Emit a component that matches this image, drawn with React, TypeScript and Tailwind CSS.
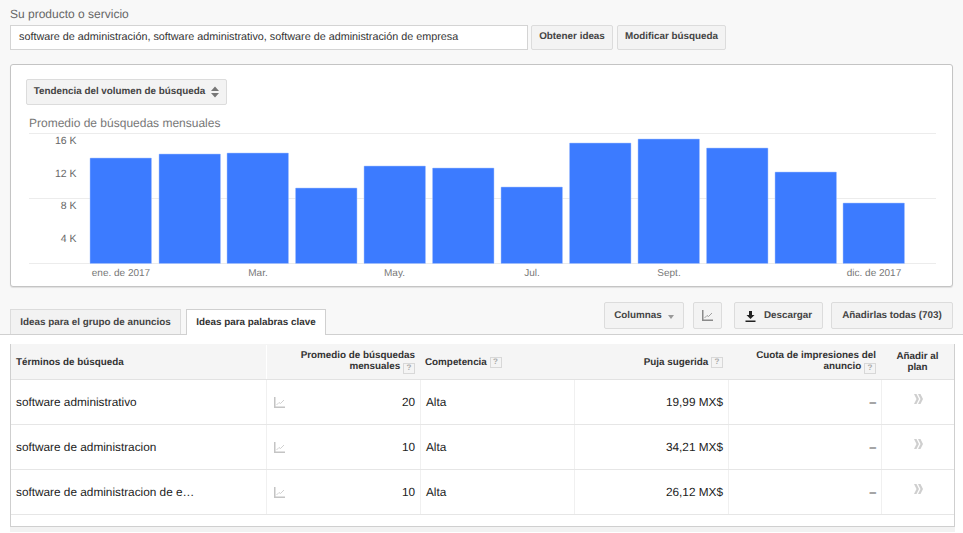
const bars = [
  { x: 90, top: 158 },
  { x: 159, top: 154 },
  { x: 227, top: 153 },
  { x: 295.5, top: 188 },
  { x: 364, top: 166 },
  { x: 432.5, top: 168 },
  { x: 501, top: 187 },
  { x: 569.5, top: 143 },
  { x: 638, top: 139 },
  { x: 706.5, top: 148 },
  { x: 775, top: 172 },
  { x: 843, top: 203 },
];

const yLabels = [
  { label: "16 K", y: 144 },
  { label: "12 K", y: 177 },
  { label: "8 K", y: 209 },
  { label: "4 K", y: 242 },
];

const xLabels = [
  { label: "ene. de 2017", x: 121 },
  { label: "Mar.", x: 258 },
  { label: "May.", x: 394.5 },
  { label: "Jul.", x: 532 },
  { label: "Sept.", x: 669 },
  { label: "dic. de 2017", x: 874 },
];

const rows = [
  { term: "software administrativo", avg: "20", bid: "19,99 MX$" },
  { term: "software de administracion", avg: "10", bid: "34,21 MX$" },
  { term: "software de administracion de e…", avg: "10", bid: "26,12 MX$" },
];

const Help = () => (
  <span className="inline-flex h-[11px] w-[12px] items-center justify-center border border-[#d8d8d8] bg-[#f4f4f4] align-[-1px] text-[8px] leading-none font-bold text-[#aaaaaa]">
    ?
  </span>
);

const TrendIcon = ({ color }: { color: string }) => (
  <svg width="11" height="11" viewBox="0 0 11 11" fill="none" stroke={color}>
    <path d="M.75 0v10.250H11" strokeWidth="1.500" />
    <path d="M2.500 8 5 5.500 6.500 6.500 10 3" strokeWidth="0.8" />
  </svg>
);

const Chevrons = () => (
  <svg width="9" height="10" viewBox="0 0 9 10" fill="#cfcfcf">
    <path d="M0 0h2.500l2.500 5-2.500 5H0l2.500-5zM4 0h2.500L9 5l-2.500 5H4l2.500-5z" />
  </svg>
);

const Chart = () => (
  <svg width="963" height="150" viewBox="0 133 963 150" className="block">
    {[133.5, 198.5, 263.5].map((y) => (
      <line key={y} x1="29" x2="936" y1={y} y2={y} stroke="#ececec" />
    ))}
    {bars.map((b) => (
      <rect
        key={b.x}
        x={b.x}
        y={b.top}
        width="61.500"
        height={263.5 - b.top}
        rx="0.5"
        fill="#3c7bff"
        stroke="#a9c5ff"
        strokeWidth="0.5"
      />
    ))}
    {yLabels.map((l) => (
      <text key={l.label} x="76.500" y={l.y} textAnchor="end" fontSize="10.500" fill="#666666">
        {l.label}
      </text>
    ))}
    {xLabels.map((l) => (
      <text key={l.label} x={l.x} y="276" textAnchor="middle" fontSize="10" fill="#777777">
        {l.label}
      </text>
    ))}
  </svg>
);

const btn =
  "flex h-[25px] items-center justify-center rounded-[2px] border border-[#dcdcdc] bg-[#f3f3f3] text-[9.85px] font-bold text-[#444444]";

const App = () => {
  return (
    <div className="flex h-[533px] w-[963px] flex-col overflow-hidden bg-[#f8f8f8] font-['Liberation_Sans',Arial,sans-serif] [text-rendering:geometricPrecision]">
      <div className="shrink-0 px-[10px] pt-[7px]">
        <div className="text-[12px] leading-[15px] text-[#666666]">Su producto o servicio</div>
        <div className="mt-[3px] flex">
          <div className="flex h-[25px] w-[518px] items-center border border-[#d4d4d4] bg-white pl-[8px] text-[10.8px] text-[#333333]">
            software de administración, software administrativo, software de administración de empresa
          </div>
          <div className={`${btn} ml-[3px] w-[82px]`}>Obtener ideas</div>
          <div className={`${btn} ml-[4px] w-[109px]`}>Modificar búsqueda</div>
        </div>

        <div className="mt-[14px] h-[223px] w-[943px] rounded-[3px] border border-[#c4c4c4] bg-white pt-[14px] pl-[15px] shadow-[0_1px_1px_rgba(0,0,0,0.1)]">
          <div className={`${btn} h-[26px] w-[201px] gap-[6px]`}>
            Tendencia del volumen de búsqueda
            <svg width="8" height="12" viewBox="0 0 8 12" fill="#777777">
              <path d="M4 0.500 8 5H0zM4 11.500 0 7h8z" />
            </svg>
          </div>
          <div className="mt-[10px] pl-[3px] text-[12px] leading-[16px] text-[#777777]">
            Promedio de búsquedas mensuales
          </div>
          <div className="mt-[2px] -ml-[26px]">
            <Chart />
          </div>
        </div>
      </div>

      <div className="mt-[14px] flex h-[34px] shrink-0 items-end border-b border-[#d0d0d0] pr-[10px] pl-[10px]">
        <div className="flex h-[25px] w-[171px] items-center justify-center border border-b-0 border-[#dcdcdc] bg-[#f2f2f2] pt-[2px] text-[9.85px] font-bold text-[#444444]">
          Ideas para el grupo de anuncios
        </div>
        <div className="relative top-px ml-[5px] flex h-[26px] w-[140px] items-center justify-center border border-b-0 border-[#d0d0d0] bg-white pt-px text-[9.85px] font-bold text-[#333333]">
          Ideas para palabras clave
        </div>
        <div className="mb-[5px] ml-auto flex">
          <div className={`${btn} h-[27px] w-[80px] gap-[6px] pt-[2px]`}>
            Columnas
            <span className="mt-px h-0 w-0 border-x-[3.5px] border-t-[4px] border-x-transparent border-t-[#999999]" />
          </div>
          <div className={`${btn} ml-[9px] h-[27px] w-[29px]`}>
            <TrendIcon color="#8a8a8a" />
          </div>
          <div className={`${btn} ml-[12px] h-[27px] w-[89px] gap-[8px] pt-[2px]`}>
            <svg width="11" height="11" viewBox="0 0 11 11" fill="#222222">
              <path d="M4 0h3v4h2.500L5.500 8 1.500 4H4zM.5 9.500h10V11H.5z" />
            </svg>
            Descargar
          </div>
          <div className={`${btn} ml-[8px] h-[27px] w-[122px] pt-[2px]`}>Añadirlas todas (703)</div>
        </div>
      </div>

      <div className="flex-1 bg-white pt-[9px]">
        <div className="mx-[10px] w-[945px] border-x border-b border-[#cfcfcf] pb-[11px] text-[#222222]">
          <div className="flex h-[36px] border-b border-[#e2e2e2] bg-[#f5f5f5] pt-px text-[9.85px] leading-[11px] font-bold text-[#333333]">
            <div className="flex w-[255px] items-center pl-[5px]">Términos de búsqueda</div>
            <div className="flex w-[154px] items-center justify-end border-l border-white pr-[5px] text-right">
              <div>
                Promedio de búsquedas
                <br />
                mensuales <Help />
              </div>
            </div>
            <div className="flex w-[154px] items-center pl-[5px]">
              Competencia&nbsp;
              <Help />
            </div>
            <div className="flex w-[154px] items-center justify-end pr-[5px]">
              Puja sugerida&nbsp;
              <Help />
            </div>
            <div className="flex w-[153px] items-center justify-end pr-[5px] text-right">
              <div>
                Cuota de impresiones del
                <br />
                anuncio <Help />
              </div>
            </div>
            <div className="flex flex-1 items-center justify-center text-center">
              <div>
                Añadir al
                <br />
                plan
              </div>
            </div>
          </div>
          {rows.map((row) => (
            <div key={row.term} className="flex h-[45px] border-b border-[#e6e6e6] text-[11.8px]">
              <div className="flex w-[255px] items-center pt-px pl-[5px]">{row.term}</div>
              <div className="flex w-[154px] items-center justify-between border-l border-[#f0f0f0] pr-[5px] pl-[7px]">
                <TrendIcon color="#c4c4c4" />
                <span className="pt-px">{row.avg}</span>
              </div>
              <div className="flex w-[154px] items-center border-l border-[#f0f0f0] pt-px pl-[5px]">Alta</div>
              <div className="flex w-[154px] items-center justify-end border-l border-[#f0f0f0] pt-px pr-[5px]">{row.bid}</div>
              <div className="flex w-[153px] items-center justify-end border-l border-[#f0f0f0] pt-px pr-[5px]">–</div>
              <div className="flex flex-1 items-center justify-center border-l border-[#f0f0f0] pb-[6px]">
                <Chevrons />
              </div>
            </div>
          ))}
        </div>
        <div className="mx-[10px] h-[5px] w-[945px] bg-[#f2f2f2]" />
      </div>
    </div>
  );
};

export default App;
